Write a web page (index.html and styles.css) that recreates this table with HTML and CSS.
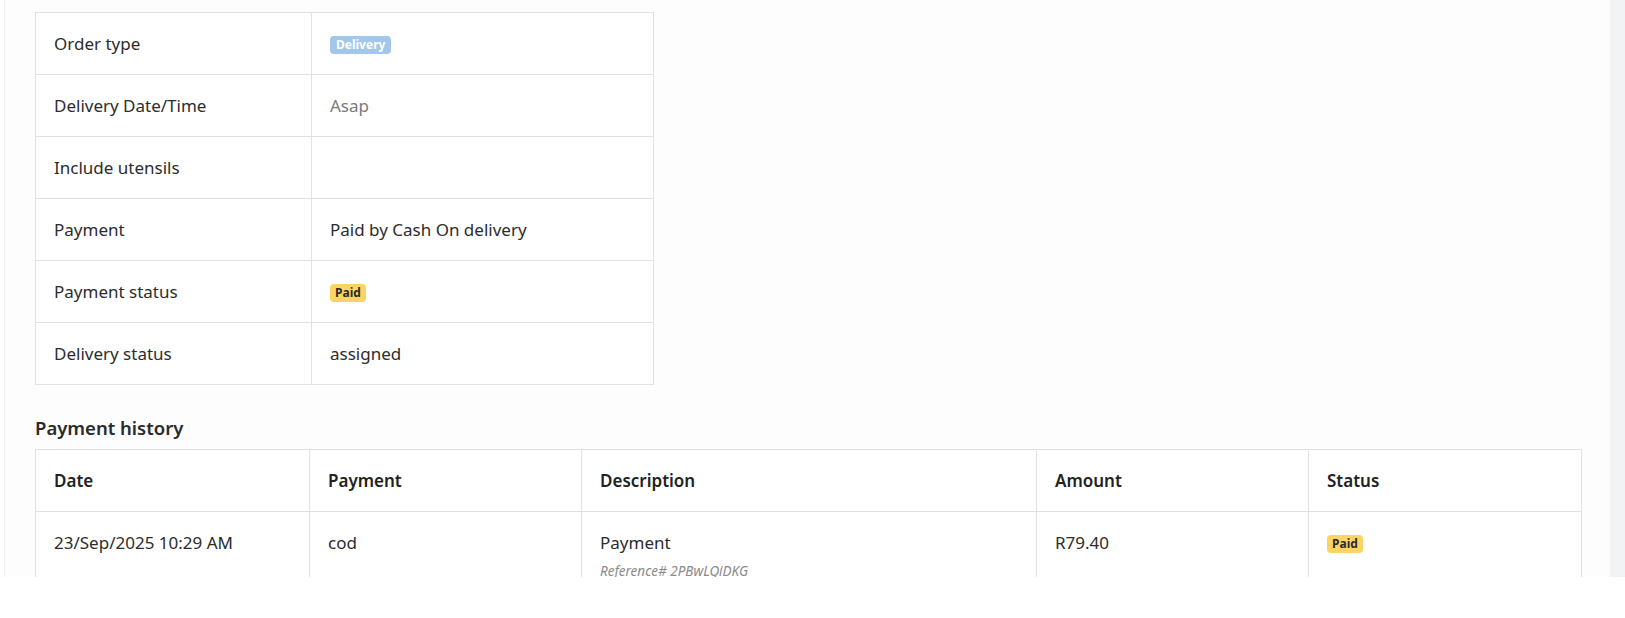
FILE: index.html
```html
<!DOCTYPE html>
<html lang="en">
<head>
<meta charset="utf-8">
<title>Order details</title>
<link rel="stylesheet" href="styles.css">
</head>
<body>
<div class="frame">
  <main class="panel">
    <table class="info">
      <colgroup><col class="info-label-col"><col></colgroup>
      <tbody>
        <tr><td>Order type</td><td><span class="badge badge-blue">Delivery</span></td></tr>
        <tr><td>Delivery Date/Time</td><td class="muted">Asap</td></tr>
        <tr><td>Include utensils</td><td></td></tr>
        <tr><td>Payment</td><td>Paid by Cash On delivery</td></tr>
        <tr><td>Payment status</td><td><span class="badge badge-yellow">Paid</span></td></tr>
        <tr><td>Delivery status</td><td>assigned</td></tr>
      </tbody>
    </table>

    <h3 class="section-title">Payment history</h3>

    <table class="history">
      <colgroup>
        <col class="h-date"><col class="h-pay"><col class="h-desc"><col class="h-amt"><col class="h-status">
      </colgroup>
      <thead>
        <tr><th>Date</th><th>Payment</th><th>Description</th><th>Amount</th><th>Status</th></tr>
      </thead>
      <tbody>
        <tr>
          <td>23/Sep/2025 10:29 AM</td>
          <td>cod</td>
          <td>Payment<span class="ref">Reference# 2PBwLQiDKG</span></td>
          <td>R79.40</td>
          <td><span class="badge badge-yellow">Paid</span></td>
        </tr>
      </tbody>
    </table>
  </main>
  <div class="scroll-gutter"></div>
</div>
</body>
</html>
```

FILE: styles.css
```css
html, body {
  margin: 0;
  padding: 0;
  background: #ffffff;
}

body {
  font-family: "Noto Sans", "Open Sans", sans-serif;
  color: #2c2c2c;
}

.frame {
  display: flex;
  height: 577px;
  overflow: hidden;
  padding-left: 4px;
}

.panel {
  flex: 1;
  min-width: 0;
  border-left: 1px solid #f0f1f3;
  background: #fdfdfd;
  padding: 12px 29px 0 30px;
  overflow: hidden;
}

.scroll-gutter {
  width: 15px;
  background: #f2f3f5;
}

table {
  border-collapse: collapse;
  table-layout: fixed;
  background: #ffffff;
}

td, th {
  border: 1px solid #dfe1e4;
  padding: 19px 18px;
  font-size: 17px;
  line-height: 23px;
  text-align: left;
}

.info {
  width: 619px;
}

.info td {
  vertical-align: middle;
}

.info-label-col {
  width: 276px;
}

.muted {
  color: #7a7a7a;
}

.badge {
  display: inline-block;
  vertical-align: middle;
  font-size: 12px;
  font-weight: 700;
  line-height: 18px;
  padding: 0 6px;
  border-radius: 4px;
}

.badge-blue {
  background: #a2c7eb;
  color: #ffffff;
}

.badge-yellow {
  background: #fcd462;
  color: #2a2a2a;
  padding: 0 5px;
}

.section-title {
  margin: 31px 0 9px;
  font-size: 18.5px;
  line-height: 24px;
  font-weight: 600;
  color: #2a2a2a;
}

.history {
  width: 100%;
}

.history th {
  font-weight: 600;
  color: #222222;
}

.history td {
  vertical-align: top;
}

.history td .badge {
  margin-top: 4px;
  vertical-align: top;
}

.h-date { width: 274px; }
.h-pay { width: 272px; }
.h-desc { width: 455px; }
.h-amt { width: 272px; }
.h-status { width: 273px; }

.ref {
  display: block;
  margin-top: 8px;
  font-size: 13.5px;
  line-height: 18px;
  font-style: italic;
  font-weight: 400;
  color: #8a8a8a;
}
```
